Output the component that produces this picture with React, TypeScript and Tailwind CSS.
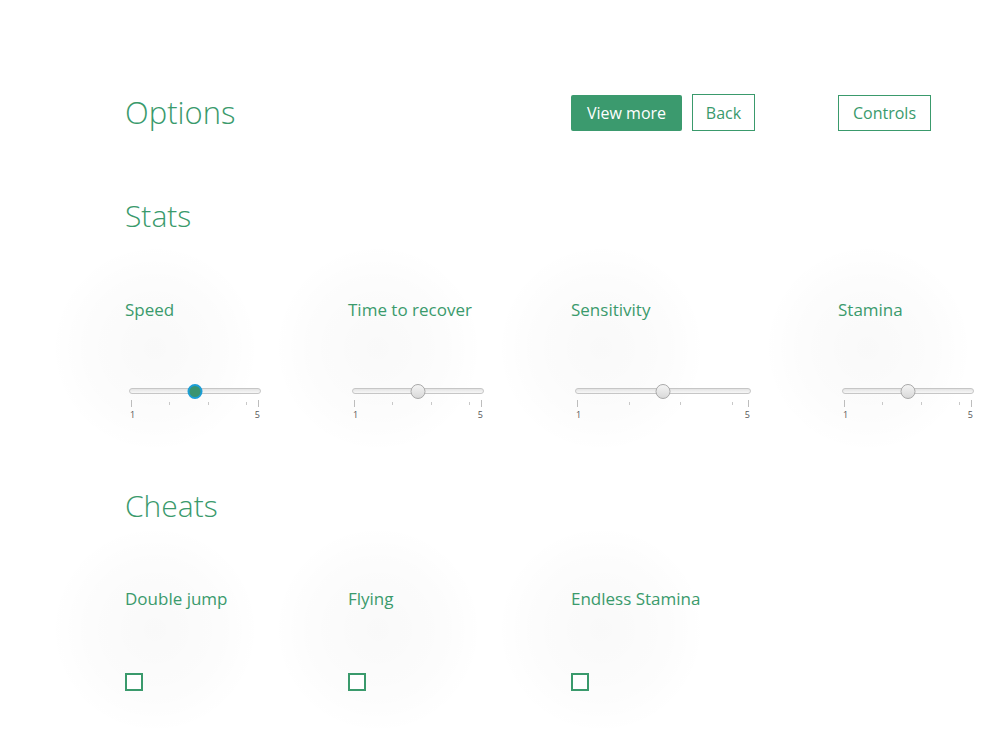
const green = "text-[#3a9a6c]";

const Slider = ({ width, active }: { width: number; active?: boolean }) => {
  return (
    <div className="flex flex-col" style={{ width }}>
      {/* track + thumb */}
      <div className="relative h-[16px] flex items-center">
        <div className="w-full h-[6px] rounded-full border border-[#c6c6c6] bg-gradient-to-b from-[#e4e4e4] to-[#f7f7f7]" />
        <div
          className={
            active
              ? "absolute left-1/2 -translate-x-1/2 w-[15px] h-[15px] rounded-full bg-[#3a9470] border-2 border-[#1c9ed6]"
              : "absolute left-1/2 -translate-x-1/2 w-[15px] h-[15px] rounded-full bg-gradient-to-b from-[#f4f4f4] to-[#d9d9d9] border border-[#a9a9a9]"
          }
        />
      </div>
      {/* ticks */}
      <div className="relative h-[7px] mt-[1px] mx-[2px]">
        <div className="absolute left-0 top-0 w-px h-[7px] bg-[#bdbdbd]" />
        <div className="absolute left-[30%] top-[2px] w-px h-[3px] bg-[#c8c8c8]" />
        <div className="absolute left-[60%] top-[2px] w-px h-[3px] bg-[#c8c8c8]" />
        <div className="absolute left-[90%] top-[2px] w-px h-[3px] bg-[#c8c8c8]" />
        <div className="absolute right-0 top-0 w-px h-[7px] bg-[#bdbdbd]" />
      </div>
      <div className="flex justify-between text-[9px] leading-none text-[#555] mt-[3px] mx-[1px]">
        <span>1</span>
        <span>5</span>
      </div>
    </div>
  );
};

// faint halo behind each cell
const halo =
  "bg-[radial-gradient(circle_105px_at_100px_45%,rgba(0,0,0,0.025),rgba(0,0,0,0.01)_65%,transparent)]";

const StatCell = ({ label, width, active }: { label: string; width: number; active?: boolean }) => (
  <div className={`flex flex-col ${halo} -ml-[70px] pl-[70px] -my-[60px] py-[60px]`}>
    <span className={`text-[17px] leading-none ${green}`}>{label}</span>
    <div className="mt-[65px] ml-[4px]">
      <Slider width={width} active={active} />
    </div>
  </div>
);

const CheatCell = ({ label }: { label: string }) => (
  <div className={`flex flex-col ${halo} -ml-[70px] pl-[70px] -my-[60px] py-[60px]`}>
    <span className={`text-[17px] leading-none ${green}`}>{label}</span>
    <div className="mt-[66px] w-[18px] h-[18px] border-2 border-[#3a9a6c] bg-white" />
  </div>
);

const App = () => {
  return (
    <div
      className="w-[1000px] h-[750px] bg-white overflow-hidden pl-[125px] pt-[94px]"
      style={{ fontFamily: '"Open Sans", "Noto Sans", sans-serif' }}
    >
      {/* Header */}
      <div className="flex items-center h-[37px]">
        <h1 className={`w-[446px] text-[31px] font-light leading-none ${green}`}>Options</h1>
        <button className="h-[36px] w-[111px] rounded-[2px] bg-[#3b9a6e] text-white text-[16px]">
          View more
        </button>
        <button className={`ml-[10px] h-[37px] w-[63px] border border-[#3a9a6c] text-[16px] ${green}`}>
          Back
        </button>
        <button className={`ml-[83px] h-[36px] w-[93px] border border-[#3a9a6c] text-[16px] ${green}`}>
          Controls
        </button>
      </div>

      {/* Stats */}
      <h2 className={`mt-[70px] text-[30px] font-light leading-none ${green}`}>Stats</h2>
      <div className="relative z-0 mt-[70px] grid grid-cols-[223px_223px_267px_160px]">
        <StatCell label="Speed" width={132} active />
        <StatCell label="Time to recover" width={132} />
        <StatCell label="Sensitivity" width={176} />
        <StatCell label="Stamina" width={132} />
      </div>

      {/* Cheats */}
      <h2 className={`mt-[72px] text-[30px] font-light leading-none ${green}`}>Cheats</h2>
      <div className="mt-[69px] grid grid-cols-[223px_223px_267px]">
        <CheatCell label="Double jump" />
        <CheatCell label="Flying" />
        <CheatCell label="Endless Stamina" />
      </div>
    </div>
  );
};

export default App;
